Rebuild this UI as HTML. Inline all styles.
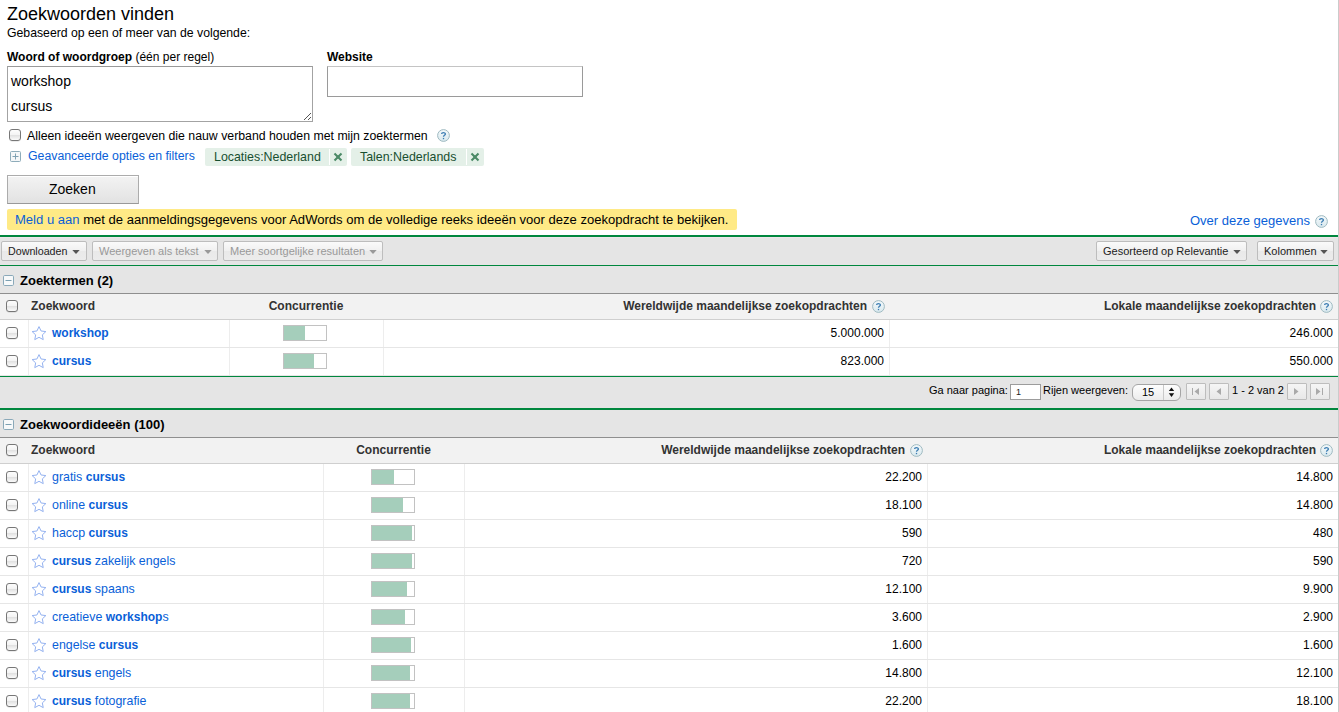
<!DOCTYPE html><html><head><meta charset="utf-8"><title>Zoekwoorden vinden</title><style>
html,body{margin:0;padding:0;background:#fff;} body{width:1339px;height:712px;overflow:hidden;position:relative;font-family:"Liberation Sans", sans-serif;}
.t{position:absolute;white-space:nowrap;} .b{position:absolute;}
.cb{position:absolute;width:12px;height:12px;box-sizing:border-box;border:1px solid #777;border-radius:3px;background:linear-gradient(#fdfdfd,#f4f4f4 45%,#e2e2e2 55%,#fbfbfb);box-shadow:0 0.5px 0.5px rgba(0,0,0,.15);}
</style></head><body>
<div class="t" style="left:7px;top:4px;font-size:18px;line-height:21px;font-weight:400;color:#000;">Zoekwoorden vinden</div>
<div class="t" style="left:7px;top:26px;font-size:12.25px;line-height:15px;font-weight:400;color:#000;">Gebaseerd op een of meer van de volgende:</div>
<div class="t" style="left:7px;top:50px;font-size:12px;line-height:15px;font-weight:400;color:#000;"><b>Woord of woordgroep</b> (één per regel)</div>
<div class="t" style="left:327px;top:50px;font-size:12px;line-height:15px;font-weight:700;color:#000;">Website</div>
<div class="b" style="left:7px;top:66px;width:306px;height:56px;border:1px solid #a3a3a3;border-top-color:#999;box-sizing:border-box;background:#fff;"></div>
<div class="t" style="left:11px;top:73px;font-size:14px;line-height:17px;font-weight:400;color:#000;">workshop</div>
<div class="t" style="left:11px;top:98px;font-size:14px;line-height:17px;font-weight:400;color:#000;">cursus</div>
<svg class="b" style="left:303px;top:112px" width="9" height="9" viewBox="0 0 9 9"><path d="M1 8 L8 1 M5 8 L8 5" stroke="#555" stroke-width="1"/></svg>
<div class="b" style="left:327px;top:66px;width:256px;height:31px;border:1px solid #9a9a9a;border-top-color:#c4c4c4;box-sizing:border-box;background:#fff;"></div>
<div class="cb" style="left:9px;top:129px"></div>
<div class="t" style="left:27px;top:129px;font-size:12.3px;line-height:15px;font-weight:400;color:#000;">Alleen ideeën weergeven die nauw verband houden met mijn zoektermen</div>
<svg class="b" style="left:437px;top:129px" width="13" height="13" viewBox="0 0 13 13"><defs><linearGradient id="hg437129" x1="0" y1="0" x2="0" y2="1"><stop offset="0" stop-color="#f4f9fb"/><stop offset="1" stop-color="#d9e9ee"/></linearGradient></defs><circle cx="6.5" cy="6.5" r="5.9" fill="url(#hg437129)" stroke="#9fbac1" stroke-width="1"/><path d="M4.6 5.0 C4.6 3.2 8.4 3.2 8.4 5.0 C8.4 6.3 6.5 6.4 6.5 7.8" fill="none" stroke="#3d7db3" stroke-width="1.3"/><rect x="5.85" y="8.9" width="1.3" height="1.3" fill="#3d7db3"/></svg>
<svg class="b" style="left:10px;top:151px" width="11" height="11" viewBox="0 0 11 11"><rect x="0.5" y="0.5" width="10" height="10" rx="1" fill="#f5f7f8" stroke="#8eacba"/><path d="M2.5 5.5 H8.5 M5.5 2.5 V8.5" stroke="#7fa1b2" stroke-width="1"/></svg>
<div class="t" style="left:28px;top:149px;font-size:12.3px;line-height:15px;font-weight:400;color:#0a5fd8;">Geavanceerde opties en filters</div>
<div class="b" style="left:205px;top:148px;width:142px;height:18px;background:#e4f0e8;border-radius:2px;"></div><div class="t" style="left:214px;top:150px;font-size:12.4px;line-height:15px;font-weight:400;color:#184f30;">Locaties:Nederland</div><div class="b" style="left:329px;top:149px;width:1px;height:16px;background:#fff;"></div><svg class="b" style="left:333px;top:152px" width="10" height="10" viewBox="0 0 10 10"><path d="M1.5 1.5 L8.5 8.5 M8.5 1.5 L1.5 8.5" stroke="#4c8a67" stroke-width="2.1"/><circle cx="5" cy="5" r="1.6" fill="#4c8a67"/></svg>
<div class="b" style="left:351px;top:148px;width:133px;height:18px;background:#e4f0e8;border-radius:2px;"></div><div class="t" style="left:360px;top:150px;font-size:12.4px;line-height:15px;font-weight:400;color:#184f30;">Talen:Nederlands</div><div class="b" style="left:466px;top:149px;width:1px;height:16px;background:#fff;"></div><svg class="b" style="left:470px;top:152px" width="10" height="10" viewBox="0 0 10 10"><path d="M1.5 1.5 L8.5 8.5 M8.5 1.5 L1.5 8.5" stroke="#4c8a67" stroke-width="2.1"/><circle cx="5" cy="5" r="1.6" fill="#4c8a67"/></svg>
<div class="b" style="left:7px;top:175px;width:132px;height:29px;border:1px solid #acacac;border-bottom-color:#999;box-sizing:border-box;background:linear-gradient(#f3f3f3,#e2e2e2);box-shadow:inset 0 1px 0 #fff;"></div>
<div class="t" style="left:49px;top:181px;font-size:14px;line-height:17px;font-weight:400;color:#000;">Zoeken</div>
<div class="b" style="left:7px;top:209px;width:730px;height:21px;background:#ffea86;border-radius:2px;"></div>
<div class="t" style="left:15px;top:212px;font-size:13.05px;line-height:16px;font-weight:400;color:#000;"><span style="color:#0a5fd8">Meld u aan</span> met de aanmeldingsgegevens voor AdWords om de volledige reeks ideeën voor deze zoekopdracht te bekijken.</div>
<div class="t" style="left:1190px;top:213px;font-size:13px;line-height:16px;font-weight:400;color:#0a5fd8;">Over deze gegevens</div>
<svg class="b" style="left:1315px;top:215px" width="13" height="13" viewBox="0 0 13 13"><defs><linearGradient id="hg1315215" x1="0" y1="0" x2="0" y2="1"><stop offset="0" stop-color="#f4f9fb"/><stop offset="1" stop-color="#d9e9ee"/></linearGradient></defs><circle cx="6.5" cy="6.5" r="5.9" fill="url(#hg1315215)" stroke="#9fbac1" stroke-width="1"/><path d="M4.6 5.0 C4.6 3.2 8.4 3.2 8.4 5.0 C8.4 6.3 6.5 6.4 6.5 7.8" fill="none" stroke="#3d7db3" stroke-width="1.3"/><rect x="5.85" y="8.9" width="1.3" height="1.3" fill="#3d7db3"/></svg>
<div class="b" style="left:0px;top:235px;width:1338px;height:2px;background:#00873e;"></div>
<div class="b" style="left:0px;top:237px;width:1338px;height:28px;background:#e5e5e5;"></div>
<div class="b" style="left:0px;top:237px;width:1338px;height:1px;background:#efe7ea;"></div>
<div class="b" style="left:1px;top:241px;width:86px;height:20px;border:1px solid #bdbdbd;box-sizing:border-box;border-radius:2px;background:linear-gradient(#fafafa,#f0f0f0 50%,#e9e9e9 51%,#ececec);"></div><div class="t" style="left:8px;top:245px;font-size:10.7px;line-height:13px;font-weight:400;color:#222;">Downloaden</div><svg class="b" style="left:72px;top:250px" width="8" height="5" viewBox="0 0 8 5"><path d="M0.3 0 H7.7 L4 4 Z" fill="#555"/></svg>
<div class="b" style="left:92px;top:241px;width:126px;height:20px;border:1px solid #bdbdbd;box-sizing:border-box;border-radius:2px;background:linear-gradient(#fafafa,#f0f0f0 50%,#e9e9e9 51%,#ececec);"></div><div class="t" style="left:99px;top:245px;font-size:11px;line-height:13px;font-weight:400;color:#999;">Weergeven als tekst</div><svg class="b" style="left:204px;top:250px" width="8" height="5" viewBox="0 0 8 5"><path d="M0.3 0 H7.7 L4 4 Z" fill="#999"/></svg>
<div class="b" style="left:223px;top:241px;width:160px;height:20px;border:1px solid #bdbdbd;box-sizing:border-box;border-radius:2px;background:linear-gradient(#fafafa,#f0f0f0 50%,#e9e9e9 51%,#ececec);"></div><div class="t" style="left:230px;top:245px;font-size:11px;line-height:13px;font-weight:400;color:#999;">Meer soortgelijke resultaten</div><svg class="b" style="left:369px;top:250px" width="8" height="5" viewBox="0 0 8 5"><path d="M0.3 0 H7.7 L4 4 Z" fill="#999"/></svg>
<div class="b" style="left:1096px;top:241px;width:151px;height:20px;border:1px solid #bdbdbd;box-sizing:border-box;border-radius:2px;background:linear-gradient(#fafafa,#f0f0f0 50%,#e9e9e9 51%,#ececec);"></div><div class="t" style="left:1103px;top:245px;font-size:11px;line-height:13px;font-weight:400;color:#222;">Gesorteerd op Relevantie</div><svg class="b" style="left:1233px;top:250px" width="8" height="5" viewBox="0 0 8 5"><path d="M0.3 0 H7.7 L4 4 Z" fill="#555"/></svg>
<div class="b" style="left:1257px;top:241px;width:77px;height:20px;border:1px solid #bdbdbd;box-sizing:border-box;border-radius:2px;background:linear-gradient(#fafafa,#f0f0f0 50%,#e9e9e9 51%,#ececec);"></div><div class="t" style="left:1264px;top:245px;font-size:11px;line-height:13px;font-weight:400;color:#222;">Kolommen</div><svg class="b" style="left:1320px;top:250px" width="8" height="5" viewBox="0 0 8 5"><path d="M0.3 0 H7.7 L4 4 Z" fill="#555"/></svg>
<div class="b" style="left:0px;top:265px;width:1338px;height:1px;background:#00873e;"></div>
<div class="b" style="left:0px;top:266px;width:1338px;height:27px;background:#e5e5e5;"></div><svg class="b" style="left:3px;top:275px" width="11" height="11" viewBox="0 0 11 11"><rect x="0.5" y="0.5" width="10" height="10" rx="1.2" fill="#f7f9fa" stroke="#8aa9b9"/><path d="M2.5 5.5 H8.5" stroke="#7b9fb1" stroke-width="1"/></svg><div class="t" style="left:20px;top:273px;font-size:13px;line-height:16px;font-weight:700;color:#000;">Zoektermen (2)</div><div class="b" style="left:0px;top:293px;width:1338px;height:1px;background:#8f8f8f;"></div><div class="b" style="left:0px;top:294px;width:1338px;height:25px;background:#f2f2f2;"></div><div class="b" style="left:0px;top:319px;width:1338px;height:1px;background:#cfcfcf;"></div><div class="cb" style="left:6px;top:300px"></div><div class="t" style="left:31px;top:299px;font-size:12px;line-height:15px;font-weight:700;color:#333;">Zoekwoord</div><div class="t" style="left:229px;width:154px;text-align:center;top:299px;font-size:12px;line-height:15px;font-weight:700;color:#333">Concurrentie</div><div class="t" style="right:472px;top:299px;font-size:12px;line-height:15px;font-weight:700;color:#333;text-align:right;">Wereldwijde maandelijkse zoekopdrachten</div><svg class="b" style="left:872px;top:300px" width="13" height="13" viewBox="0 0 13 13"><defs><linearGradient id="hg872300" x1="0" y1="0" x2="0" y2="1"><stop offset="0" stop-color="#f4f9fb"/><stop offset="1" stop-color="#d9e9ee"/></linearGradient></defs><circle cx="6.5" cy="6.5" r="5.9" fill="url(#hg872300)" stroke="#9fbac1" stroke-width="1"/><path d="M4.6 5.0 C4.6 3.2 8.4 3.2 8.4 5.0 C8.4 6.3 6.5 6.4 6.5 7.8" fill="none" stroke="#3d7db3" stroke-width="1.3"/><rect x="5.85" y="8.9" width="1.3" height="1.3" fill="#3d7db3"/></svg><div class="t" style="right:23px;top:299px;font-size:12px;line-height:15px;font-weight:700;color:#333;text-align:right;">Lokale maandelijkse zoekopdrachten</div><svg class="b" style="left:1320px;top:300px" width="13" height="13" viewBox="0 0 13 13"><defs><linearGradient id="hg1320300" x1="0" y1="0" x2="0" y2="1"><stop offset="0" stop-color="#f4f9fb"/><stop offset="1" stop-color="#d9e9ee"/></linearGradient></defs><circle cx="6.5" cy="6.5" r="5.9" fill="url(#hg1320300)" stroke="#9fbac1" stroke-width="1"/><path d="M4.6 5.0 C4.6 3.2 8.4 3.2 8.4 5.0 C8.4 6.3 6.5 6.4 6.5 7.8" fill="none" stroke="#3d7db3" stroke-width="1.3"/><rect x="5.85" y="8.9" width="1.3" height="1.3" fill="#3d7db3"/></svg><div class="b" style="left:0px;top:320px;width:1338px;height:27px;background:#fff;"></div><div class="b" style="left:0px;top:347px;width:1338px;height:1px;background:#e6e6e6;"></div><div class="b" style="left:28px;top:320px;width:1px;height:27px;background:#ededed;"></div><div class="b" style="left:229px;top:320px;width:1px;height:27px;background:#ededed;"></div><div class="b" style="left:383px;top:320px;width:1px;height:27px;background:#ededed;"></div><div class="b" style="left:889px;top:320px;width:1px;height:27px;background:#ededed;"></div><div class="cb" style="left:6px;top:327px"></div><svg class="b" style="left:31px;top:326px" width="16" height="16" viewBox="0 0 16 16"><path d="M8.00 0.60 L10.06 4.97 L14.85 5.58 L11.33 8.88 L12.23 13.62 L8.00 11.30 L3.77 13.62 L4.67 8.88 L1.15 5.58 L5.94 4.97 Z" fill="none" stroke="#94b2f0" stroke-width="1" stroke-linejoin="round"/></svg><div class="t" style="left:52px;top:326px;font-size:12.4px;line-height:15px;font-weight:400;color:#0a5fd8;"><b style="font-size:12px">workshop</b></div><div class="b" style="left:283px;top:325px;width:44px;height:16px;border:1px solid #c2c2c2;box-sizing:border-box;background:#fff;"></div><div class="b" style="left:284px;top:326px;width:21px;height:14px;background:#a5cebb;"></div><div class="t" style="right:455px;top:326px;font-size:12px;line-height:15px;font-weight:400;color:#000;text-align:right;">5.000.000</div><div class="t" style="right:6px;top:326px;font-size:12px;line-height:15px;font-weight:400;color:#000;text-align:right;">246.000</div><div class="b" style="left:0px;top:348px;width:1338px;height:27px;background:#fff;"></div><div class="b" style="left:0px;top:375px;width:1338px;height:1px;background:#e6e6e6;"></div><div class="b" style="left:28px;top:348px;width:1px;height:27px;background:#ededed;"></div><div class="b" style="left:229px;top:348px;width:1px;height:27px;background:#ededed;"></div><div class="b" style="left:383px;top:348px;width:1px;height:27px;background:#ededed;"></div><div class="b" style="left:889px;top:348px;width:1px;height:27px;background:#ededed;"></div><div class="cb" style="left:6px;top:355px"></div><svg class="b" style="left:31px;top:354px" width="16" height="16" viewBox="0 0 16 16"><path d="M8.00 0.60 L10.06 4.97 L14.85 5.58 L11.33 8.88 L12.23 13.62 L8.00 11.30 L3.77 13.62 L4.67 8.88 L1.15 5.58 L5.94 4.97 Z" fill="none" stroke="#94b2f0" stroke-width="1" stroke-linejoin="round"/></svg><div class="t" style="left:52px;top:354px;font-size:12.4px;line-height:15px;font-weight:400;color:#0a5fd8;"><b style="font-size:12px">cursus</b></div><div class="b" style="left:283px;top:353px;width:44px;height:16px;border:1px solid #c2c2c2;box-sizing:border-box;background:#fff;"></div><div class="b" style="left:284px;top:354px;width:30px;height:14px;background:#a5cebb;"></div><div class="t" style="right:455px;top:354px;font-size:12px;line-height:15px;font-weight:400;color:#000;text-align:right;">823.000</div><div class="t" style="right:6px;top:354px;font-size:12px;line-height:15px;font-weight:400;color:#000;text-align:right;">550.000</div>
<div class="b" style="left:0px;top:376px;width:1338px;height:1px;background:#00873e;"></div>
<div class="b" style="left:0px;top:377px;width:1338px;height:31px;background:#e5e5e5;"></div>
<div class="t" style="left:929px;top:384px;font-size:11px;line-height:13px;font-weight:400;color:#000;">Ga naar pagina:</div>
<div class="b" style="left:1010px;top:384px;width:31px;height:16px;border:1px solid #9c9c9c;box-sizing:border-box;background:#fff;"></div>
<div class="t" style="left:1016px;top:387px;font-size:9px;line-height:11px;font-weight:400;color:#222;">1</div>
<div class="t" style="left:1043px;top:384px;font-size:11px;line-height:13px;font-weight:400;color:#000;">Rijen weergeven:</div>
<div class="b" style="left:1132px;top:384px;width:49px;height:17px;border:1px solid #a5a5a5;box-sizing:border-box;border-radius:6px;background:linear-gradient(#fdfdfd,#ececec);"></div>
<div class="b" style="left:1163px;top:385px;width:1px;height:15px;background:#c9c9c9;"></div>
<div class="t" style="left:1142px;top:386px;font-size:11px;line-height:13px;font-weight:400;color:#000;">15</div>
<svg class="b" style="left:1168px;top:387px" width="7" height="11" viewBox="0 0 7 11"><path d="M3.5 0.5 L6.2 4 H0.8 Z M0.8 6.3 H6.2 L3.5 10 Z" fill="#111"/></svg>
<div class="b" style="left:1186px;top:383px;width:20px;height:17px;border:1px solid #bdbdbd;box-sizing:border-box;border-radius:1px;background:linear-gradient(#f5f5f5,#e8e8e8);"></div><svg class="b" style="left:1191px;top:387px" width="9" height="9" viewBox="0 0 9 9"><path d="M1 1 H2 V8 H1 Z M8 1 V8 L3.5 4.5 Z" fill="#a9a9a9"/></svg>
<div class="b" style="left:1209px;top:383px;width:20px;height:17px;border:1px solid #bdbdbd;box-sizing:border-box;border-radius:1px;background:linear-gradient(#f5f5f5,#e8e8e8);"></div><svg class="b" style="left:1214px;top:387px" width="9" height="9" viewBox="0 0 9 9"><path d="M7 1 V8 L2.5 4.5 Z" fill="#a9a9a9"/></svg>
<div class="t" style="left:1232px;top:384px;font-size:11px;line-height:13px;font-weight:400;color:#000;">1 - 2 van 2</div>
<div class="b" style="left:1287px;top:383px;width:20px;height:17px;border:1px solid #bdbdbd;box-sizing:border-box;border-radius:1px;background:linear-gradient(#f5f5f5,#e8e8e8);"></div><svg class="b" style="left:1292px;top:387px" width="9" height="9" viewBox="0 0 9 9"><path d="M2 1 V8 L6.5 4.5 Z" fill="#a9a9a9"/></svg>
<div class="b" style="left:1310px;top:383px;width:20px;height:17px;border:1px solid #bdbdbd;box-sizing:border-box;border-radius:1px;background:linear-gradient(#f5f5f5,#e8e8e8);"></div><svg class="b" style="left:1315px;top:387px" width="9" height="9" viewBox="0 0 9 9"><path d="M1 1 V8 L5.5 4.5 Z M7 1 H8 V8 H7 Z" fill="#a9a9a9"/></svg>
<div class="b" style="left:0px;top:408px;width:1338px;height:2px;background:#00873e;"></div>
<div class="b" style="left:0px;top:410px;width:1338px;height:27px;background:#e5e5e5;"></div><svg class="b" style="left:3px;top:419px" width="11" height="11" viewBox="0 0 11 11"><rect x="0.5" y="0.5" width="10" height="10" rx="1.2" fill="#f7f9fa" stroke="#8aa9b9"/><path d="M2.5 5.5 H8.5" stroke="#7b9fb1" stroke-width="1"/></svg><div class="t" style="left:20px;top:417px;font-size:13px;line-height:16px;font-weight:700;color:#000;">Zoekwoordideeën (100)</div><div class="b" style="left:0px;top:437px;width:1338px;height:1px;background:#8f8f8f;"></div><div class="b" style="left:0px;top:438px;width:1338px;height:25px;background:#f2f2f2;"></div><div class="b" style="left:0px;top:463px;width:1338px;height:1px;background:#cfcfcf;"></div><div class="cb" style="left:6px;top:444px"></div><div class="t" style="left:31px;top:443px;font-size:12px;line-height:15px;font-weight:700;color:#333;">Zoekwoord</div><div class="t" style="left:323px;width:141px;text-align:center;top:443px;font-size:12px;line-height:15px;font-weight:700;color:#333">Concurrentie</div><div class="t" style="right:434px;top:443px;font-size:12px;line-height:15px;font-weight:700;color:#333;text-align:right;">Wereldwijde maandelijkse zoekopdrachten</div><svg class="b" style="left:910px;top:444px" width="13" height="13" viewBox="0 0 13 13"><defs><linearGradient id="hg910444" x1="0" y1="0" x2="0" y2="1"><stop offset="0" stop-color="#f4f9fb"/><stop offset="1" stop-color="#d9e9ee"/></linearGradient></defs><circle cx="6.5" cy="6.5" r="5.9" fill="url(#hg910444)" stroke="#9fbac1" stroke-width="1"/><path d="M4.6 5.0 C4.6 3.2 8.4 3.2 8.4 5.0 C8.4 6.3 6.5 6.4 6.5 7.8" fill="none" stroke="#3d7db3" stroke-width="1.3"/><rect x="5.85" y="8.9" width="1.3" height="1.3" fill="#3d7db3"/></svg><div class="t" style="right:23px;top:443px;font-size:12px;line-height:15px;font-weight:700;color:#333;text-align:right;">Lokale maandelijkse zoekopdrachten</div><svg class="b" style="left:1320px;top:444px" width="13" height="13" viewBox="0 0 13 13"><defs><linearGradient id="hg1320444" x1="0" y1="0" x2="0" y2="1"><stop offset="0" stop-color="#f4f9fb"/><stop offset="1" stop-color="#d9e9ee"/></linearGradient></defs><circle cx="6.5" cy="6.5" r="5.9" fill="url(#hg1320444)" stroke="#9fbac1" stroke-width="1"/><path d="M4.6 5.0 C4.6 3.2 8.4 3.2 8.4 5.0 C8.4 6.3 6.5 6.4 6.5 7.8" fill="none" stroke="#3d7db3" stroke-width="1.3"/><rect x="5.85" y="8.9" width="1.3" height="1.3" fill="#3d7db3"/></svg><div class="b" style="left:0px;top:464px;width:1338px;height:27px;background:#fff;"></div><div class="b" style="left:0px;top:491px;width:1338px;height:1px;background:#e6e6e6;"></div><div class="b" style="left:28px;top:464px;width:1px;height:27px;background:#ededed;"></div><div class="b" style="left:323px;top:464px;width:1px;height:27px;background:#ededed;"></div><div class="b" style="left:464px;top:464px;width:1px;height:27px;background:#ededed;"></div><div class="b" style="left:927px;top:464px;width:1px;height:27px;background:#ededed;"></div><div class="cb" style="left:6px;top:471px"></div><svg class="b" style="left:31px;top:470px" width="16" height="16" viewBox="0 0 16 16"><path d="M8.00 0.60 L10.06 4.97 L14.85 5.58 L11.33 8.88 L12.23 13.62 L8.00 11.30 L3.77 13.62 L4.67 8.88 L1.15 5.58 L5.94 4.97 Z" fill="none" stroke="#94b2f0" stroke-width="1" stroke-linejoin="round"/></svg><div class="t" style="left:52px;top:470px;font-size:12.4px;line-height:15px;font-weight:400;color:#0a5fd8;">gratis <b style="font-size:12px">cursus</b></div><div class="b" style="left:371px;top:469px;width:44px;height:16px;border:1px solid #c2c2c2;box-sizing:border-box;background:#fff;"></div><div class="b" style="left:372px;top:470px;width:22px;height:14px;background:#a5cebb;"></div><div class="t" style="right:417px;top:470px;font-size:12px;line-height:15px;font-weight:400;color:#000;text-align:right;">22.200</div><div class="t" style="right:6px;top:470px;font-size:12px;line-height:15px;font-weight:400;color:#000;text-align:right;">14.800</div><div class="b" style="left:0px;top:492px;width:1338px;height:27px;background:#fff;"></div><div class="b" style="left:0px;top:519px;width:1338px;height:1px;background:#e6e6e6;"></div><div class="b" style="left:28px;top:492px;width:1px;height:27px;background:#ededed;"></div><div class="b" style="left:323px;top:492px;width:1px;height:27px;background:#ededed;"></div><div class="b" style="left:464px;top:492px;width:1px;height:27px;background:#ededed;"></div><div class="b" style="left:927px;top:492px;width:1px;height:27px;background:#ededed;"></div><div class="cb" style="left:6px;top:499px"></div><svg class="b" style="left:31px;top:498px" width="16" height="16" viewBox="0 0 16 16"><path d="M8.00 0.60 L10.06 4.97 L14.85 5.58 L11.33 8.88 L12.23 13.62 L8.00 11.30 L3.77 13.62 L4.67 8.88 L1.15 5.58 L5.94 4.97 Z" fill="none" stroke="#94b2f0" stroke-width="1" stroke-linejoin="round"/></svg><div class="t" style="left:52px;top:498px;font-size:12.4px;line-height:15px;font-weight:400;color:#0a5fd8;">online <b style="font-size:12px">cursus</b></div><div class="b" style="left:371px;top:497px;width:44px;height:16px;border:1px solid #c2c2c2;box-sizing:border-box;background:#fff;"></div><div class="b" style="left:372px;top:498px;width:31px;height:14px;background:#a5cebb;"></div><div class="t" style="right:417px;top:498px;font-size:12px;line-height:15px;font-weight:400;color:#000;text-align:right;">18.100</div><div class="t" style="right:6px;top:498px;font-size:12px;line-height:15px;font-weight:400;color:#000;text-align:right;">14.800</div><div class="b" style="left:0px;top:520px;width:1338px;height:27px;background:#fff;"></div><div class="b" style="left:0px;top:547px;width:1338px;height:1px;background:#e6e6e6;"></div><div class="b" style="left:28px;top:520px;width:1px;height:27px;background:#ededed;"></div><div class="b" style="left:323px;top:520px;width:1px;height:27px;background:#ededed;"></div><div class="b" style="left:464px;top:520px;width:1px;height:27px;background:#ededed;"></div><div class="b" style="left:927px;top:520px;width:1px;height:27px;background:#ededed;"></div><div class="cb" style="left:6px;top:527px"></div><svg class="b" style="left:31px;top:526px" width="16" height="16" viewBox="0 0 16 16"><path d="M8.00 0.60 L10.06 4.97 L14.85 5.58 L11.33 8.88 L12.23 13.62 L8.00 11.30 L3.77 13.62 L4.67 8.88 L1.15 5.58 L5.94 4.97 Z" fill="none" stroke="#94b2f0" stroke-width="1" stroke-linejoin="round"/></svg><div class="t" style="left:52px;top:526px;font-size:12.4px;line-height:15px;font-weight:400;color:#0a5fd8;">haccp <b style="font-size:12px">cursus</b></div><div class="b" style="left:371px;top:525px;width:44px;height:16px;border:1px solid #c2c2c2;box-sizing:border-box;background:#fff;"></div><div class="b" style="left:372px;top:526px;width:40px;height:14px;background:#a5cebb;"></div><div class="t" style="right:417px;top:526px;font-size:12px;line-height:15px;font-weight:400;color:#000;text-align:right;">590</div><div class="t" style="right:6px;top:526px;font-size:12px;line-height:15px;font-weight:400;color:#000;text-align:right;">480</div><div class="b" style="left:0px;top:548px;width:1338px;height:27px;background:#fff;"></div><div class="b" style="left:0px;top:575px;width:1338px;height:1px;background:#e6e6e6;"></div><div class="b" style="left:28px;top:548px;width:1px;height:27px;background:#ededed;"></div><div class="b" style="left:323px;top:548px;width:1px;height:27px;background:#ededed;"></div><div class="b" style="left:464px;top:548px;width:1px;height:27px;background:#ededed;"></div><div class="b" style="left:927px;top:548px;width:1px;height:27px;background:#ededed;"></div><div class="cb" style="left:6px;top:555px"></div><svg class="b" style="left:31px;top:554px" width="16" height="16" viewBox="0 0 16 16"><path d="M8.00 0.60 L10.06 4.97 L14.85 5.58 L11.33 8.88 L12.23 13.62 L8.00 11.30 L3.77 13.62 L4.67 8.88 L1.15 5.58 L5.94 4.97 Z" fill="none" stroke="#94b2f0" stroke-width="1" stroke-linejoin="round"/></svg><div class="t" style="left:52px;top:554px;font-size:12.4px;line-height:15px;font-weight:400;color:#0a5fd8;"><b style="font-size:12px">cursus</b> zakelijk engels</div><div class="b" style="left:371px;top:553px;width:44px;height:16px;border:1px solid #c2c2c2;box-sizing:border-box;background:#fff;"></div><div class="b" style="left:372px;top:554px;width:40px;height:14px;background:#a5cebb;"></div><div class="t" style="right:417px;top:554px;font-size:12px;line-height:15px;font-weight:400;color:#000;text-align:right;">720</div><div class="t" style="right:6px;top:554px;font-size:12px;line-height:15px;font-weight:400;color:#000;text-align:right;">590</div><div class="b" style="left:0px;top:576px;width:1338px;height:27px;background:#fff;"></div><div class="b" style="left:0px;top:603px;width:1338px;height:1px;background:#e6e6e6;"></div><div class="b" style="left:28px;top:576px;width:1px;height:27px;background:#ededed;"></div><div class="b" style="left:323px;top:576px;width:1px;height:27px;background:#ededed;"></div><div class="b" style="left:464px;top:576px;width:1px;height:27px;background:#ededed;"></div><div class="b" style="left:927px;top:576px;width:1px;height:27px;background:#ededed;"></div><div class="cb" style="left:6px;top:583px"></div><svg class="b" style="left:31px;top:582px" width="16" height="16" viewBox="0 0 16 16"><path d="M8.00 0.60 L10.06 4.97 L14.85 5.58 L11.33 8.88 L12.23 13.62 L8.00 11.30 L3.77 13.62 L4.67 8.88 L1.15 5.58 L5.94 4.97 Z" fill="none" stroke="#94b2f0" stroke-width="1" stroke-linejoin="round"/></svg><div class="t" style="left:52px;top:582px;font-size:12.4px;line-height:15px;font-weight:400;color:#0a5fd8;"><b style="font-size:12px">cursus</b> spaans</div><div class="b" style="left:371px;top:581px;width:44px;height:16px;border:1px solid #c2c2c2;box-sizing:border-box;background:#fff;"></div><div class="b" style="left:372px;top:582px;width:35px;height:14px;background:#a5cebb;"></div><div class="t" style="right:417px;top:582px;font-size:12px;line-height:15px;font-weight:400;color:#000;text-align:right;">12.100</div><div class="t" style="right:6px;top:582px;font-size:12px;line-height:15px;font-weight:400;color:#000;text-align:right;">9.900</div><div class="b" style="left:0px;top:604px;width:1338px;height:27px;background:#fff;"></div><div class="b" style="left:0px;top:631px;width:1338px;height:1px;background:#e6e6e6;"></div><div class="b" style="left:28px;top:604px;width:1px;height:27px;background:#ededed;"></div><div class="b" style="left:323px;top:604px;width:1px;height:27px;background:#ededed;"></div><div class="b" style="left:464px;top:604px;width:1px;height:27px;background:#ededed;"></div><div class="b" style="left:927px;top:604px;width:1px;height:27px;background:#ededed;"></div><div class="cb" style="left:6px;top:611px"></div><svg class="b" style="left:31px;top:610px" width="16" height="16" viewBox="0 0 16 16"><path d="M8.00 0.60 L10.06 4.97 L14.85 5.58 L11.33 8.88 L12.23 13.62 L8.00 11.30 L3.77 13.62 L4.67 8.88 L1.15 5.58 L5.94 4.97 Z" fill="none" stroke="#94b2f0" stroke-width="1" stroke-linejoin="round"/></svg><div class="t" style="left:52px;top:610px;font-size:12.4px;line-height:15px;font-weight:400;color:#0a5fd8;">creatieve <b style="font-size:12px">workshop</b>s</div><div class="b" style="left:371px;top:609px;width:44px;height:16px;border:1px solid #c2c2c2;box-sizing:border-box;background:#fff;"></div><div class="b" style="left:372px;top:610px;width:33px;height:14px;background:#a5cebb;"></div><div class="t" style="right:417px;top:610px;font-size:12px;line-height:15px;font-weight:400;color:#000;text-align:right;">3.600</div><div class="t" style="right:6px;top:610px;font-size:12px;line-height:15px;font-weight:400;color:#000;text-align:right;">2.900</div><div class="b" style="left:0px;top:632px;width:1338px;height:27px;background:#fff;"></div><div class="b" style="left:0px;top:659px;width:1338px;height:1px;background:#e6e6e6;"></div><div class="b" style="left:28px;top:632px;width:1px;height:27px;background:#ededed;"></div><div class="b" style="left:323px;top:632px;width:1px;height:27px;background:#ededed;"></div><div class="b" style="left:464px;top:632px;width:1px;height:27px;background:#ededed;"></div><div class="b" style="left:927px;top:632px;width:1px;height:27px;background:#ededed;"></div><div class="cb" style="left:6px;top:639px"></div><svg class="b" style="left:31px;top:638px" width="16" height="16" viewBox="0 0 16 16"><path d="M8.00 0.60 L10.06 4.97 L14.85 5.58 L11.33 8.88 L12.23 13.62 L8.00 11.30 L3.77 13.62 L4.67 8.88 L1.15 5.58 L5.94 4.97 Z" fill="none" stroke="#94b2f0" stroke-width="1" stroke-linejoin="round"/></svg><div class="t" style="left:52px;top:638px;font-size:12.4px;line-height:15px;font-weight:400;color:#0a5fd8;">engelse <b style="font-size:12px">cursus</b></div><div class="b" style="left:371px;top:637px;width:44px;height:16px;border:1px solid #c2c2c2;box-sizing:border-box;background:#fff;"></div><div class="b" style="left:372px;top:638px;width:39px;height:14px;background:#a5cebb;"></div><div class="t" style="right:417px;top:638px;font-size:12px;line-height:15px;font-weight:400;color:#000;text-align:right;">1.600</div><div class="t" style="right:6px;top:638px;font-size:12px;line-height:15px;font-weight:400;color:#000;text-align:right;">1.600</div><div class="b" style="left:0px;top:660px;width:1338px;height:27px;background:#fff;"></div><div class="b" style="left:0px;top:687px;width:1338px;height:1px;background:#e6e6e6;"></div><div class="b" style="left:28px;top:660px;width:1px;height:27px;background:#ededed;"></div><div class="b" style="left:323px;top:660px;width:1px;height:27px;background:#ededed;"></div><div class="b" style="left:464px;top:660px;width:1px;height:27px;background:#ededed;"></div><div class="b" style="left:927px;top:660px;width:1px;height:27px;background:#ededed;"></div><div class="cb" style="left:6px;top:667px"></div><svg class="b" style="left:31px;top:666px" width="16" height="16" viewBox="0 0 16 16"><path d="M8.00 0.60 L10.06 4.97 L14.85 5.58 L11.33 8.88 L12.23 13.62 L8.00 11.30 L3.77 13.62 L4.67 8.88 L1.15 5.58 L5.94 4.97 Z" fill="none" stroke="#94b2f0" stroke-width="1" stroke-linejoin="round"/></svg><div class="t" style="left:52px;top:666px;font-size:12.4px;line-height:15px;font-weight:400;color:#0a5fd8;"><b style="font-size:12px">cursus</b> engels</div><div class="b" style="left:371px;top:665px;width:44px;height:16px;border:1px solid #c2c2c2;box-sizing:border-box;background:#fff;"></div><div class="b" style="left:372px;top:666px;width:38px;height:14px;background:#a5cebb;"></div><div class="t" style="right:417px;top:666px;font-size:12px;line-height:15px;font-weight:400;color:#000;text-align:right;">14.800</div><div class="t" style="right:6px;top:666px;font-size:12px;line-height:15px;font-weight:400;color:#000;text-align:right;">12.100</div><div class="b" style="left:0px;top:688px;width:1338px;height:27px;background:#fff;"></div><div class="b" style="left:0px;top:715px;width:1338px;height:1px;background:#e6e6e6;"></div><div class="b" style="left:28px;top:688px;width:1px;height:27px;background:#ededed;"></div><div class="b" style="left:323px;top:688px;width:1px;height:27px;background:#ededed;"></div><div class="b" style="left:464px;top:688px;width:1px;height:27px;background:#ededed;"></div><div class="b" style="left:927px;top:688px;width:1px;height:27px;background:#ededed;"></div><div class="cb" style="left:6px;top:695px"></div><svg class="b" style="left:31px;top:694px" width="16" height="16" viewBox="0 0 16 16"><path d="M8.00 0.60 L10.06 4.97 L14.85 5.58 L11.33 8.88 L12.23 13.62 L8.00 11.30 L3.77 13.62 L4.67 8.88 L1.15 5.58 L5.94 4.97 Z" fill="none" stroke="#94b2f0" stroke-width="1" stroke-linejoin="round"/></svg><div class="t" style="left:52px;top:694px;font-size:12.4px;line-height:15px;font-weight:400;color:#0a5fd8;"><b style="font-size:12px">cursus</b> fotografie</div><div class="b" style="left:371px;top:693px;width:44px;height:16px;border:1px solid #c2c2c2;box-sizing:border-box;background:#fff;"></div><div class="b" style="left:372px;top:694px;width:38px;height:14px;background:#a5cebb;"></div><div class="t" style="right:417px;top:694px;font-size:12px;line-height:15px;font-weight:400;color:#000;text-align:right;">22.200</div><div class="t" style="right:6px;top:694px;font-size:12px;line-height:15px;font-weight:400;color:#000;text-align:right;">18.100</div>
<div class="b" style="left:1338px;top:0px;width:1px;height:712px;background:#cbcbcb;"></div>
</body></html>
